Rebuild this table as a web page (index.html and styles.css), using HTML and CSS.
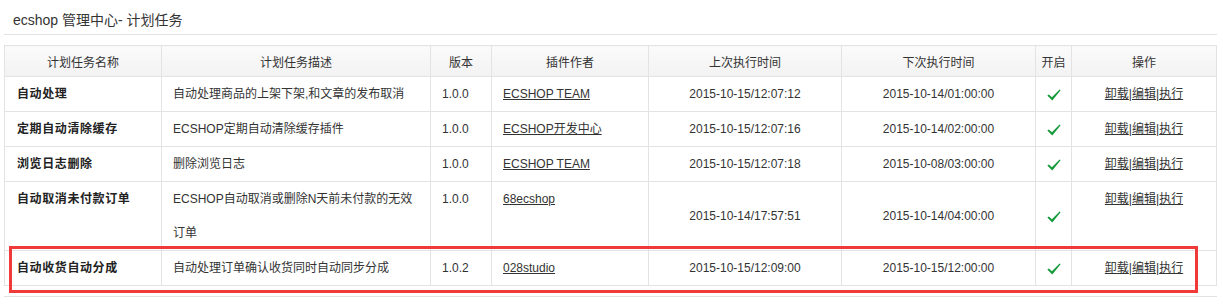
FILE: index.html
```html
<!DOCTYPE html>
<html lang="zh-CN">
<head>
<meta charset="utf-8">
<title>ecshop 管理中心- 计划任务</title>
<link rel="stylesheet" href="styles.css">
</head>
<body>
<div class="page">
  <h1 class="title">ecshop 管理中心- 计划任务</h1>
  <div class="list-wrap">
    <table class="list">
      <colgroup>
        <col class="c-name"><col class="c-desc"><col class="c-ver"><col class="c-author">
        <col class="c-last"><col class="c-next"><col class="c-on"><col class="c-op">
      </colgroup>
      <thead>
        <tr>
          <th>计划任务名称</th><th>计划任务描述</th><th>版本</th><th>插件作者</th>
          <th>上次执行时间</th><th>下次执行时间</th><th>开启</th><th>操作</th>
        </tr>
      </thead>
      <tbody>
        <tr>
          <td class="name">自动处理</td>
          <td>自动处理商品的上架下架,和文章的发布取消</td>
          <td>1.0.0</td>
          <td><a href="#">ECSHOP TEAM</a></td>
          <td class="mid center">2015-10-15/12:07:12</td>
          <td class="mid center">2015-10-14/01:00:00</td>
          <td class="mid center"><svg class="check" width="14" height="12" viewBox="0 0 14 12"><path d="M0.3 6.6 L1.9 5.4 L4.9 8.2 L12.6 0.4 L13.6 1.3 L5.3 11.6 Z"/></svg></td>
          <td class="center"><a href="#">卸载</a>|<a href="#">编辑</a>|<a href="#">执行</a></td>
        </tr>
        <tr>
          <td class="name">定期自动清除缓存</td>
          <td>ECSHOP定期自动清除缓存插件</td>
          <td>1.0.0</td>
          <td><a href="#">ECSHOP开发中心</a></td>
          <td class="mid center">2015-10-15/12:07:16</td>
          <td class="mid center">2015-10-14/02:00:00</td>
          <td class="mid center"><svg class="check" width="14" height="12" viewBox="0 0 14 12"><path d="M0.3 6.6 L1.9 5.4 L4.9 8.2 L12.6 0.4 L13.6 1.3 L5.3 11.6 Z"/></svg></td>
          <td class="center"><a href="#">卸载</a>|<a href="#">编辑</a>|<a href="#">执行</a></td>
        </tr>
        <tr>
          <td class="name">浏览日志删除</td>
          <td>删除浏览日志</td>
          <td>1.0.0</td>
          <td><a href="#">ECSHOP TEAM</a></td>
          <td class="mid center">2015-10-15/12:07:18</td>
          <td class="mid center">2015-10-08/03:00:00</td>
          <td class="mid center"><svg class="check" width="14" height="12" viewBox="0 0 14 12"><path d="M0.3 6.6 L1.9 5.4 L4.9 8.2 L12.6 0.4 L13.6 1.3 L5.3 11.6 Z"/></svg></td>
          <td class="center"><a href="#">卸载</a>|<a href="#">编辑</a>|<a href="#">执行</a></td>
        </tr>
        <tr>
          <td class="name">自动取消未付款订单</td>
          <td>ECSHOP自动取消或删除N天前未付款的无效订单</td>
          <td>1.0.0</td>
          <td><a href="#">68ecshop</a></td>
          <td class="mid center">2015-10-14/17:57:51</td>
          <td class="mid center">2015-10-14/04:00:00</td>
          <td class="mid center"><svg class="check" width="14" height="12" viewBox="0 0 14 12"><path d="M0.3 6.6 L1.9 5.4 L4.9 8.2 L12.6 0.4 L13.6 1.3 L5.3 11.6 Z"/></svg></td>
          <td class="center"><a href="#">卸载</a>|<a href="#">编辑</a>|<a href="#">执行</a></td>
        </tr>
        <tr>
          <td class="name">自动收货自动分成</td>
          <td>自动处理订单确认收货同时自动同步分成</td>
          <td>1.0.2</td>
          <td><a href="#">028studio</a></td>
          <td class="mid center">2015-10-15/12:09:00</td>
          <td class="mid center">2015-10-15/12:00:00</td>
          <td class="mid center"><svg class="check" width="14" height="12" viewBox="0 0 14 12"><path d="M0.3 6.6 L1.9 5.4 L4.9 8.2 L12.6 0.4 L13.6 1.3 L5.3 11.6 Z"/></svg></td>
          <td class="center"><a href="#">卸载</a>|<a href="#">编辑</a>|<a href="#">执行</a></td>
        </tr>
      </tbody>
    </table>
    <div class="highlight"></div>
  </div>
  <div class="foot-line"></div>
</div>
</body>
</html>
```
FILE: styles.css
```css
html, body {
  margin: 0;
  padding: 0;
  background: #fff;
}
body {
  font-family: Arial, "Liberation Sans", "Noto Sans CJK SC", sans-serif;
  font-size: 12px;
  color: #333;
}
.page {
  width: 1213px;
  margin-left: 4px;
}
.title {
  margin: 0;
  height: 35px;
  box-sizing: border-box;
  padding: 5px 0 0 9px;
  line-height: 30px;
  font-size: 14px;
  font-weight: normal;
  color: #333;
  border-bottom: 1px solid #e2e2e2;
}
.list-wrap {
  position: relative;
  margin-top: 10px;
}
.list {
  width: 1213px;
  table-layout: fixed;
  border-collapse: collapse;
  border: 1px solid #e3e3e3;
}
.c-name { width: 157px; }
.c-desc { width: 269px; }
.c-ver { width: 61px; }
.c-author { width: 157px; }
.c-last { width: 193px; }
.c-next { width: 194px; }
.c-on { width: 36px; }
.c-op { width: 145px; }
.list th {
  height: 30px;
  padding: 0;
  font-weight: normal;
  text-align: center;
  color: #333;
  background: linear-gradient(#fbfbfb, #f2f2f2);
  border: 1px solid #e3e3e3;
}
.list td {
  height: 34px;
  padding: 0 11px;
  line-height: 34px;
  vertical-align: top;
  border: 1px solid #e3e3e3;
  color: #333;
}
.list td.name {
  padding-left: 12px;
  font-weight: bold;
  letter-spacing: 0.6px;
  color: #222;
}
.list td.center {
  text-align: center;
  padding: 0;
}
.list td.mid {
  vertical-align: middle;
}
.list a {
  color: #333;
  text-decoration: underline;
}
.check {
  display: inline-block;
  vertical-align: middle;
  fill: #159a3a;
}
.highlight {
  position: absolute;
  left: 5px;
  top: 201px;
  width: 1189px;
  height: 47px;
  box-sizing: border-box;
  border: 3px solid #f03a3a;
  pointer-events: none;
}
.foot-line {
  margin-top: 10px;
  height: 1px;
  background: #e2e2e2;
}
```
